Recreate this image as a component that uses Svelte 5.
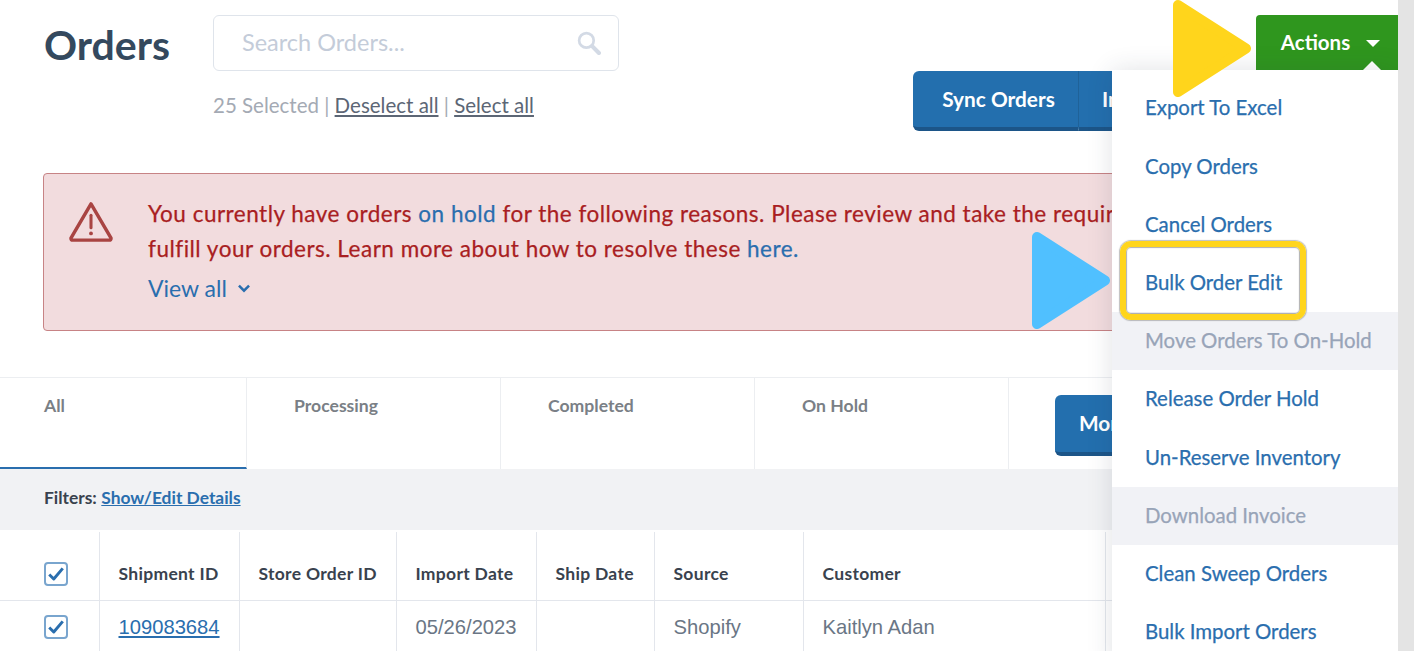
<script>
  const tabs = ['All', 'Processing', 'Completed', 'On Hold'];
  const columns = ['Shipment ID', 'Store Order ID', 'Import Date', 'Ship Date', 'Source', 'Customer'];
  const menu = [
    { label: 'Export To Excel' },
    { label: 'Copy Orders' },
    { label: 'Cancel Orders' },
    { label: 'Bulk Order Edit' },
    { label: 'Move Orders To On-Hold', disabled: true },
    { label: 'Release Order Hold' },
    { label: 'Un-Reserve Inventory' },
    { label: 'Download Invoice', disabled: true },
    { label: 'Clean Sweep Orders' },
    { label: 'Bulk Import Orders' }
  ];
</script>

{#snippet check()}
  <span class="check">
    <svg viewBox="0 0 16 16" width="18" height="18">
      <path d="M2 8.5 L6 12.5 L14 3" fill="none" stroke="#2a6eae" stroke-width="2.6" stroke-linejoin="round" />
    </svg>
  </span>
{/snippet}

<div class="page">
  <main>
    <header>
      <h1>Orders</h1>
      <div class="search-col">
        <div class="search">
          <span>Search Orders...</span>
          <svg viewBox="0 0 24 24" width="25" height="25">
            <circle cx="10" cy="10" r="7" fill="none" stroke="#d3dae5" stroke-width="2.6" />
            <path d="M15.5 15.5 L22 22" stroke="#d3dae5" stroke-width="4" stroke-linecap="round" />
          </svg>
        </div>
        <p class="selected">25 Selected | <a href="#a">Deselect all</a> | <a href="#a">Select all</a></p>
      </div>
      <div class="actions-col">
        <button class="actions">
          Actions
          <i class="caret"></i>
          <i class="notch"></i>
        </button>
        <div class="btn-group">
          <button class="blue sync">Sync Orders</button>
          <button class="blue import">Import Orders</button>
        </div>
      </div>
    </header>

    <section class="alert">
      <svg class="warn" viewBox="0 0 48 44" width="46" height="42">
        <path d="M24 3 L45 39 Q45 41 43 41 L5 41 Q3 41 3 39 Z" fill="none" stroke="#a94442" stroke-width="3.6" stroke-linejoin="round" />
        <path d="M24 15 V28" stroke="#a94442" stroke-width="3.2" stroke-linecap="round" />
        <circle cx="24" cy="34" r="2" fill="#a94442" />
      </svg>
      <div class="alert-body">
        <p>You currently have orders <a href="#a">on hold</a> for the following reasons. Please review and take the required action to<br />fulfill your orders. Learn more about how to resolve these <a href="#a">here.</a></p>
        <div class="view-all">
          View all
          <svg viewBox="0 0 12 8" width="14" height="9">
            <path d="M1.5 1.5 L6 6 L10.5 1.5" fill="none" stroke="#2a6eae" stroke-width="2.2" />
          </svg>
        </div>
      </div>
    </section>

    <nav class="tabs">
      {#each tabs as tab, i}
        <div class="tab" class:active={i === 0}>{tab}</div>
      {/each}
      <div class="tab-more"><button class="blue more">More</button></div>
    </nav>

    <div class="filters"><b>Filters:</b> <a href="#a">Show/Edit Details</a></div>

    <table>
      <colgroup>
        <col style="width: 99px" /><col style="width: 140px" /><col style="width: 157px" />
        <col style="width: 140px" /><col style="width: 118px" /><col style="width: 149px" />
        <col style="width: 302px" /><col />
      </colgroup>
      <thead>
        <tr>
          <th class="box">{@render check()}</th>
          {#each columns as col}<th>{col}</th>{/each}
          <th></th>
        </tr>
      </thead>
      <tbody>
        <tr>
          <td class="box">{@render check()}</td>
          <td><a href="#a">109083684</a></td>
          <td></td>
          <td>05/26/2023</td>
          <td></td>
          <td>Shopify</td>
          <td>Kaitlyn Adan</td>
          <td></td>
        </tr>
      </tbody>
    </table>

    <ul class="menu">
      {#each menu as item}
        <li class:disabled={item.disabled}>{item.label}</li>
      {/each}
    </ul>
    <div class="highlight"></div>
    <svg class="pointer yellow" viewBox="0 0 78 97" width="78" height="97">
      <path d="M5 5 L73 48.5 L5 92 Z" fill="#ffd51c" stroke="#ffd51c" stroke-width="10" stroke-linejoin="round" />
    </svg>
    <svg class="pointer sky" viewBox="0 0 78 97" width="78" height="97">
      <path d="M5 5 L73 48.5 L5 92 Z" fill="#50c0ff" stroke="#50c0ff" stroke-width="10" stroke-linejoin="round" />
    </svg>
  </main>
  <div class="scrollbar"></div>
</div>

<style>
  :global(body) {
    margin: 0;
    background: #fff;
    font-family: Lato, "Open Sans", sans-serif;
  }

  .page {
    display: flex;
    width: 1414px;
    height: 651px;
    overflow: hidden;
  }

  main {
    position: relative;
    width: 1398px;
    flex: none;
    overflow: hidden;
  }

  .scrollbar {
    flex: 1;
    background: #e4e4e4;
  }

  a { color: #2a6eae; }

  header {
    display: flex;
    height: 173px;
    padding: 15px 0 0 44px;
    box-sizing: border-box;
  }

  h1 {
    width: 169px;
    margin: 8px 0 0;
    font-size: 41px;
    line-height: 44px;
    font-weight: 700;
    color: #34495e;
  }

  .search {
    display: flex;
    align-items: center;
    justify-content: space-between;
    width: 406px;
    height: 56px;
    padding: 0 17px 2px 28px;
    box-sizing: border-box;
    border: 1px solid #dfe4eb;
    border-radius: 6px;
    color: #c4ccd9;
    font-size: 23.5px;
  }

  .selected {
    margin: 22px 0 0;
    font-size: 20.5px;
    line-height: 24px;
    color: #a4aab4;
  }

  .selected a { color: #5c6675; }

  .actions-col {
    display: flex;
    flex-direction: column;
    align-items: flex-end;
    margin-left: auto;
  }

  button {
    border: 0;
    font-family: inherit;
    font-weight: 700;
    color: #fff;
    cursor: pointer;
    white-space: nowrap;
  }

  .actions {
    position: relative;
    width: 142px;
    height: 55px;
    padding: 0 23px 2px 0;
    background: #2f961e;
    border-radius: 4px 0 0 0;
    font-size: 20.5px;
    margin-bottom: 1px;
  }

  .caret {
    position: absolute;
    left: 110px;
    top: 25px;
    border: 7px solid transparent;
    border-top-color: #fff;
    border-bottom: 0;
  }

  .notch {
    position: absolute;
    left: 107px;
    bottom: 0;
    border: 9px solid transparent;
    border-bottom: 9px solid #fff;
    border-top: 0;
  }

  .btn-group {
    display: flex;
    width: 485px;
  }

  .blue {
    height: 60px;
    background: #236fae;
    border-bottom: 4px solid #1c5588;
    border-radius: 6px;
    font-size: 20.8px;
  }

  .sync {
    width: 166px;
    border-radius: 6px 0 0 6px;
    border-right: 1px solid #1f6299;
    padding: 0 0 2px 6px;
  }

  .import {
    width: 160px;
    border-radius: 0;
    text-align: left;
    padding: 0 0 2px 23px;
    overflow: hidden;
  }

  .alert {
    display: flex;
    width: 1340px;
    height: 158px;
    margin-left: 43px;
    box-sizing: border-box;
    padding: 22px 0 0 24px;
    background: #f2dcde;
    border: 1px solid #c78385;
    border-radius: 4px;
    color: #a91e22;
    font-size: 22.5px;
    letter-spacing: 0.5px;
  }

  .warn { flex: none; margin-top: 5px; }

  .alert-body { margin-left: 34px; }

  .alert p {
    margin: 0;
    line-height: 35px;
    white-space: nowrap;
    -webkit-text-stroke: 0.25px currentColor;
  }

  .alert a { text-decoration: none; }

  .view-all {
    display: flex;
    align-items: center;
    gap: 10px;
    margin-top: 6px;
    line-height: 32px;
    font-size: 23px;
    letter-spacing: 0;
    color: #2a6eae;
  }

  .tabs {
    display: flex;
    height: 92px;
    margin-top: 46px;
    border-top: 1px solid #eceef1;
    box-sizing: border-box;
  }

  .tab {
    width: 254px;
    padding: 17px 0 0 47px;
    box-sizing: border-box;
    border-right: 1px solid #eceef1;
    font-size: 17.6px;
    font-weight: 700;
    color: #7a7f86;
  }

  .tab.active {
    width: 247px;
    padding-left: 44px;
    border-bottom: 2px solid #2a6eae;
  }

  .tab-more { padding: 17px 0 0 46px; }

  .more { width: 120px; height: 61px; text-align: left; padding: 0 0 2px 24px; }

  .filters {
    height: 61px;
    padding-left: 44px;
    box-sizing: border-box;
    line-height: 58px;
    background: #f1f2f4;
    font-size: 17.4px;
    color: #39424e;
  }

  .filters a { font-weight: 700; }

  table {
    width: 100%;
    margin-top: 2px;
    border-collapse: collapse;
    table-layout: fixed;
  }

  th, td {
    padding: 0 0 0 19px;
    box-sizing: border-box;
    border-right: 1px solid #e3e6ec;
    border-bottom: 1px solid #e3e6ec;
    text-align: left;
  }

  th {
    height: 68px;
    padding-top: 16px;
    font-size: 17.5px;
    font-weight: 700;
    letter-spacing: 0.3px;
    color: #39424e;
  }

  td {
    height: 54px;
    font-family: "Liberation Sans", sans-serif;
    font-size: 20.2px;
    color: #6a7685;
  }

  .box { padding: 0 0 0 44px; }

  th.box { padding-top: 16px; }

  .check {
    display: flex;
    align-items: center;
    justify-content: center;
    width: 24px;
    height: 24px;
    box-sizing: border-box;
    border: 2px solid #79a5ce;
    border-radius: 4px;
    background: #fff;
  }

  .menu {
    position: absolute;
    left: 1112px;
    top: 70px;
    width: 286px;
    height: 600px;
    margin: 0;
    padding: 9.4px 0 0;
    box-sizing: border-box;
    list-style: none;
    background: #fff;
    box-shadow: 0 0 24px rgba(40, 50, 70, 0.14);
  }

  .menu li {
    height: 58.2px;
    padding-left: 33px;
    line-height: 57px;
    font-size: 20.4px;
    color: #2a6eae;
    -webkit-text-stroke: 0.25px currentColor;
  }

  .menu li.disabled {
    background: #f1f2f6;
    color: #98a4b8;
  }

  .highlight {
    position: absolute;
    left: 1120px;
    top: 241px;
    width: 186px;
    height: 79px;
    box-sizing: border-box;
    border: 6px solid #ffd51c;
    border-radius: 11px;
    box-shadow: 0 0 1px 1px rgba(110, 110, 110, 0.45), inset 0 0 1px 1px rgba(110, 110, 110, 0.55);
  }

  .pointer { position: absolute; }
  .yellow { left: 1173px; top: 0; }
  .sky { left: 1032px; top: 232px; }
</style>
